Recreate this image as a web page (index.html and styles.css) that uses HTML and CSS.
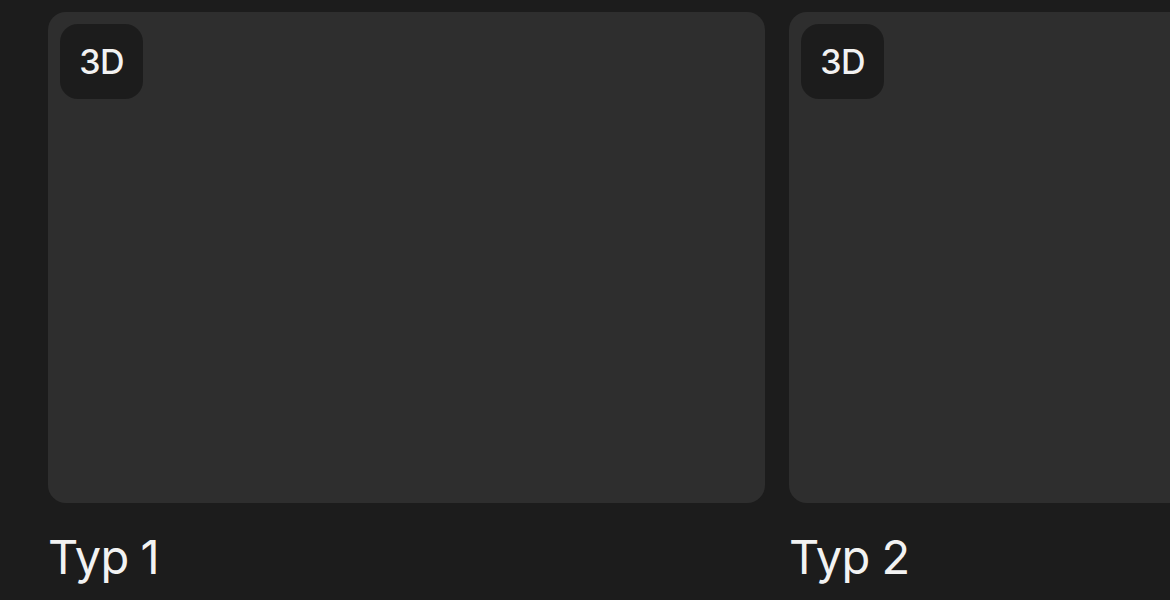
FILE: index.html
```html
<!DOCTYPE html>
<html lang="de">
<head>
<meta charset="utf-8">
<title>Typen</title>
<link rel="stylesheet" href="styles.css">
</head>
<body>
<div class="row">
  <div class="item">
    <div class="card"><span class="badge">3D</span></div>
    <div class="label">Typ 1</div>
  </div>
  <div class="item">
    <div class="card"><span class="badge">3D</span></div>
    <div class="label">Typ 2</div>
  </div>
</div>
</body>
</html>
```

FILE: styles.css
```css
html, body {
  margin: 0;
  padding: 0;
  background: #1c1c1c;
  width: 1170px;
  height: 600px;
  overflow: hidden;
  font-family: Inter, "Noto Sans", sans-serif;
  color: #f2f2f2;
}
.row {
  display: flex;
  gap: 24px;
  padding: 12px 0 0 48px;
  width: 1170px;
  box-sizing: border-box;
  overflow: hidden;
}
.item {
  flex: 0 0 717px;
  display: flex;
  flex-direction: column;
}
.card {
  height: 491px;
  background: #2e2e2e;
  border-radius: 18px;
  padding: 12px;
  box-sizing: border-box;
  display: flex;
  align-items: flex-start;
}
.badge {
  display: flex;
  align-items: center;
  justify-content: center;
  width: 83px;
  height: 75px;
  border-radius: 18px;
  background: #1c1c1c;
  font-size: 34px;
  font-weight: 500;
  letter-spacing: -0.8px;
}
.label {
  margin-top: 26px;
  font-size: 47px;
  line-height: 56px;
  font-weight: 400;
  letter-spacing: -0.6px;
  word-spacing: -1px;
}
```
